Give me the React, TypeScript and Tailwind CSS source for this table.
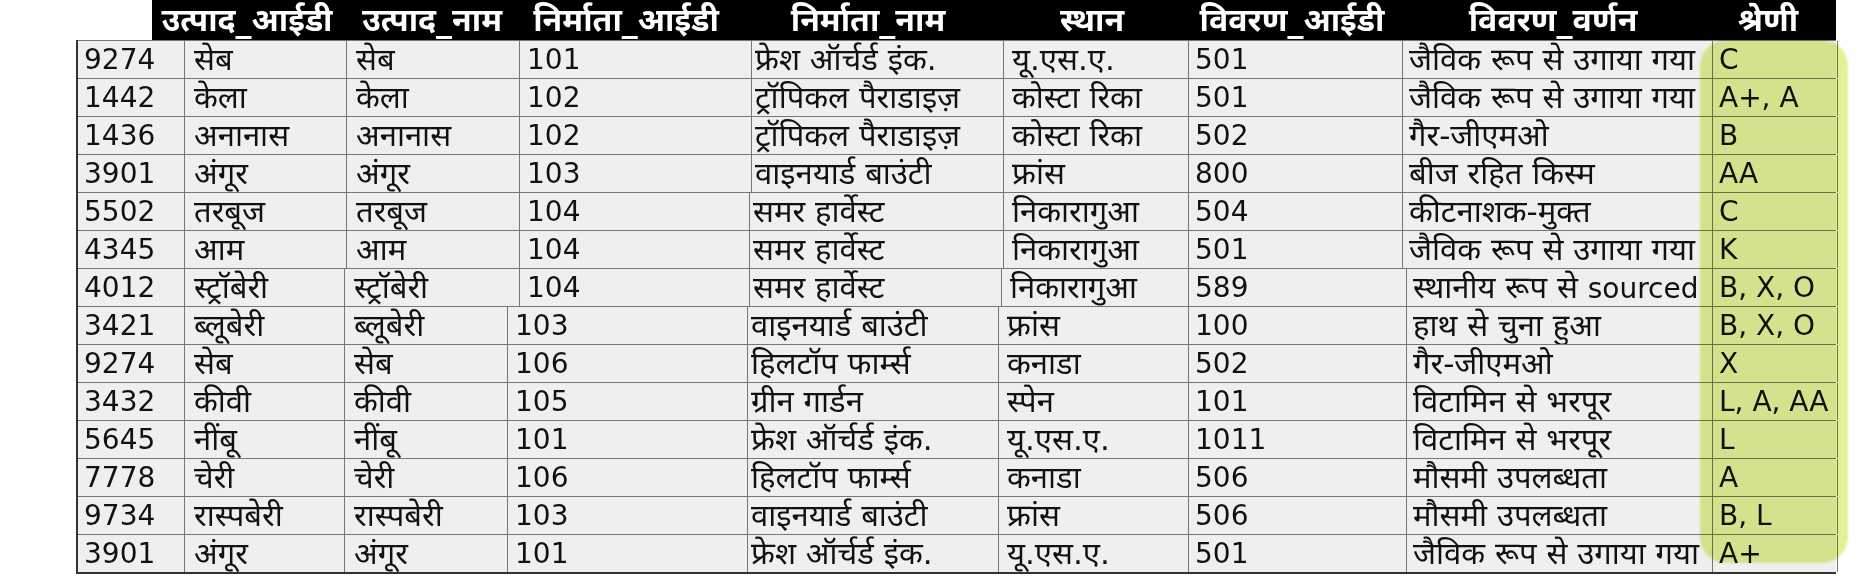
import type { ReactNode } from "react";

const headers: { label: string; w: string }[] = [
  { label: "उत्पाद_आईडी", w: "w-[190px]" },
  { label: "उत्पाद_नाम", w: "w-[180px]" },
  { label: "निर्माता_आईडी", w: "w-[208px]" },
  { label: "निर्माता_नाम", w: "w-[276px]" },
  { label: "स्थान", w: "w-[172px]" },
  { label: "विवरण_आईडी", w: "w-[228px]" },
  { label: "विवरण_वर्णन", w: "w-[294px]" },
  { label: "श्रेणी", w: "w-[136px]" },
];

// column widths shift a little between row groups, as in the source sheet
const layouts: string[][] = [
  ["w-[107px]", "w-[162px]", "w-[173px]", "w-[232px]", "w-[252px]", "w-[185px]", "w-[214px]", "w-[310px]", "w-[125px]"],
  ["w-[107px]", "w-[162px]", "w-[173px]", "w-[230px]", "w-[254px]", "w-[185px]", "w-[214px]", "w-[310px]", "w-[125px]"],
  ["w-[107px]", "w-[160px]", "w-[175px]", "w-[230px]", "w-[252px]", "w-[187px]", "w-[218px]", "w-[306px]", "w-[125px]"],
  ["w-[107px]", "w-[160px]", "w-[163px]", "w-[240px]", "w-[251px]", "w-[190px]", "w-[218px]", "w-[306px]", "w-[125px]"],
];

const pads = ["pl-[6px]", "pl-[9px]", "pl-[9px]", "pl-[7px]", "pl-[3px]", "pl-[8px]", "pl-[6px]", "pl-[6px]", "pl-[6px]"];

const rows: { l: number; c: string[] }[] = [
  { l: 0, c: ["9274", "सेब", "सेब", "101", "फ्रेश ऑर्चर्ड इंक.", "यू.एस.ए.", "501", "जैविक रूप से उगाया गया", "C"] },
  { l: 0, c: ["1442", "केला", "केला", "102", "ट्रॉपिकल पैराडाइज़", "कोस्टा रिका", "501", "जैविक रूप से उगाया गया", "A+, A"] },
  { l: 0, c: ["1436", "अनानास", "अनानास", "102", "ट्रॉपिकल पैराडाइज़", "कोस्टा रिका", "502", "गैर-जीएमओ", "B"] },
  { l: 0, c: ["3901", "अंगूर", "अंगूर", "103", "वाइनयार्ड बाउंटी", "फ्रांस", "800", "बीज रहित किस्म", "AA"] },
  { l: 1, c: ["5502", "तरबूज", "तरबूज", "104", "समर हार्वेस्ट", "निकारागुआ", "504", "कीटनाशक-मुक्त", "C"] },
  { l: 1, c: ["4345", "आम", "आम", "104", "समर हार्वेस्ट", "निकारागुआ", "501", "जैविक रूप से उगाया गया", "K"] },
  { l: 2, c: ["4012", "स्ट्रॉबेरी", "स्ट्रॉबेरी", "104", "समर हार्वेस्ट", "निकारागुआ", "589", "स्थानीय रूप से sourced", "B, X, O"] },
  { l: 3, c: ["3421", "ब्लूबेरी", "ब्लूबेरी", "103", "वाइनयार्ड बाउंटी", "फ्रांस", "100", "हाथ से चुना हुआ", "B, X, O"] },
  { l: 3, c: ["9274", "सेब", "सेब", "106", "हिलटॉप फार्म्स", "कनाडा", "502", "गैर-जीएमओ", "X"] },
  { l: 3, c: ["3432", "कीवी", "कीवी", "105", "ग्रीन गार्डन", "स्पेन", "101", "विटामिन से भरपूर", "L, A, AA"] },
  { l: 3, c: ["5645", "नींबू", "नींबू", "101", "फ्रेश ऑर्चर्ड इंक.", "यू.एस.ए.", "1011", "विटामिन से भरपूर", "L"] },
  { l: 3, c: ["7778", "चेरी", "चेरी", "106", "हिलटॉप फार्म्स", "कनाडा", "506", "मौसमी उपलब्धता", "A"] },
  { l: 3, c: ["9734", "रास्पबेरी", "रास्पबेरी", "103", "वाइनयार्ड बाउंटी", "फ्रांस", "506", "मौसमी उपलब्धता", "B, L"] },
  { l: 3, c: ["3901", "अंगूर", "अंगूर", "101", "फ्रेश ऑर्चर्ड इंक.", "यू.एस.ए.", "501", "जैविक रूप से उगाया गया", "A+"] },
];

const isDeva = (ch: string) => ch >= "\u0900" && ch <= "\u097F";

// split a cell into Devanagari / Latin runs so each gets its own size
function Runs({ text }: { text: string }) {
  const parts: { deva: boolean; s: string }[] = [];
  for (const ch of text) {
    const letter = /[A-Za-z0-9\u0900-\u097F]/.test(ch);
    const d = isDeva(ch);
    const last = parts[parts.length - 1];
    if (last && (!letter || last.deva === d)) last.s += ch;
    else parts.push({ deva: d, s: ch });
  }
  const out: ReactNode[] = parts.map((p, i) =>
    p.deva ? (
      <span key={i} className="text-[31px]">
        {p.s}
      </span>
    ) : (
      <span key={i}>{p.s}</span>
    )
  );
  return <span>{out}</span>;
}

export default function App() {
  return (
    <div className="w-[1869px] h-[576px] bg-white overflow-hidden font-['DejaVu_Sans','Noto_Sans_Devanagari','Noto_Sans',sans-serif] text-[#111]">
      {/* header bar */}
      <div className="ml-[152px] w-[1684px] h-[40px] bg-black flex items-center text-white font-bold text-[32px] leading-none overflow-hidden">
        {headers.map((h) => (
          <div key={h.label} className={`${h.w} shrink-0 text-center whitespace-nowrap`}>
            {h.label}
          </div>
        ))}
      </div>

      {/* table body */}
      <div className="relative ml-[76px] w-[1760px] border-l-2 border-b-2 border-[#333] bg-[#efefef]">
        {rows.map((r, i) => (
          <div key={i} className="flex h-[38px] border-t border-[#777]">
            {r.c.map((v, j) => (
              <div
                key={j}
                className={`${layouts[r.l][j]} ${pads[j]} shrink-0 flex items-center border-r border-[#777] text-[28px] leading-none whitespace-nowrap overflow-hidden`}
              >
                <Runs text={v} />
              </div>
            ))}
          </div>
        ))}

        {/* highlight over the grade column */}
        <div className="absolute left-[1622px] top-0 w-[148px] h-[523px] rounded-[26px] bg-[#e4f096] mix-blend-multiply blur-[1px] pointer-events-none" />
      </div>
    </div>
  );
}
